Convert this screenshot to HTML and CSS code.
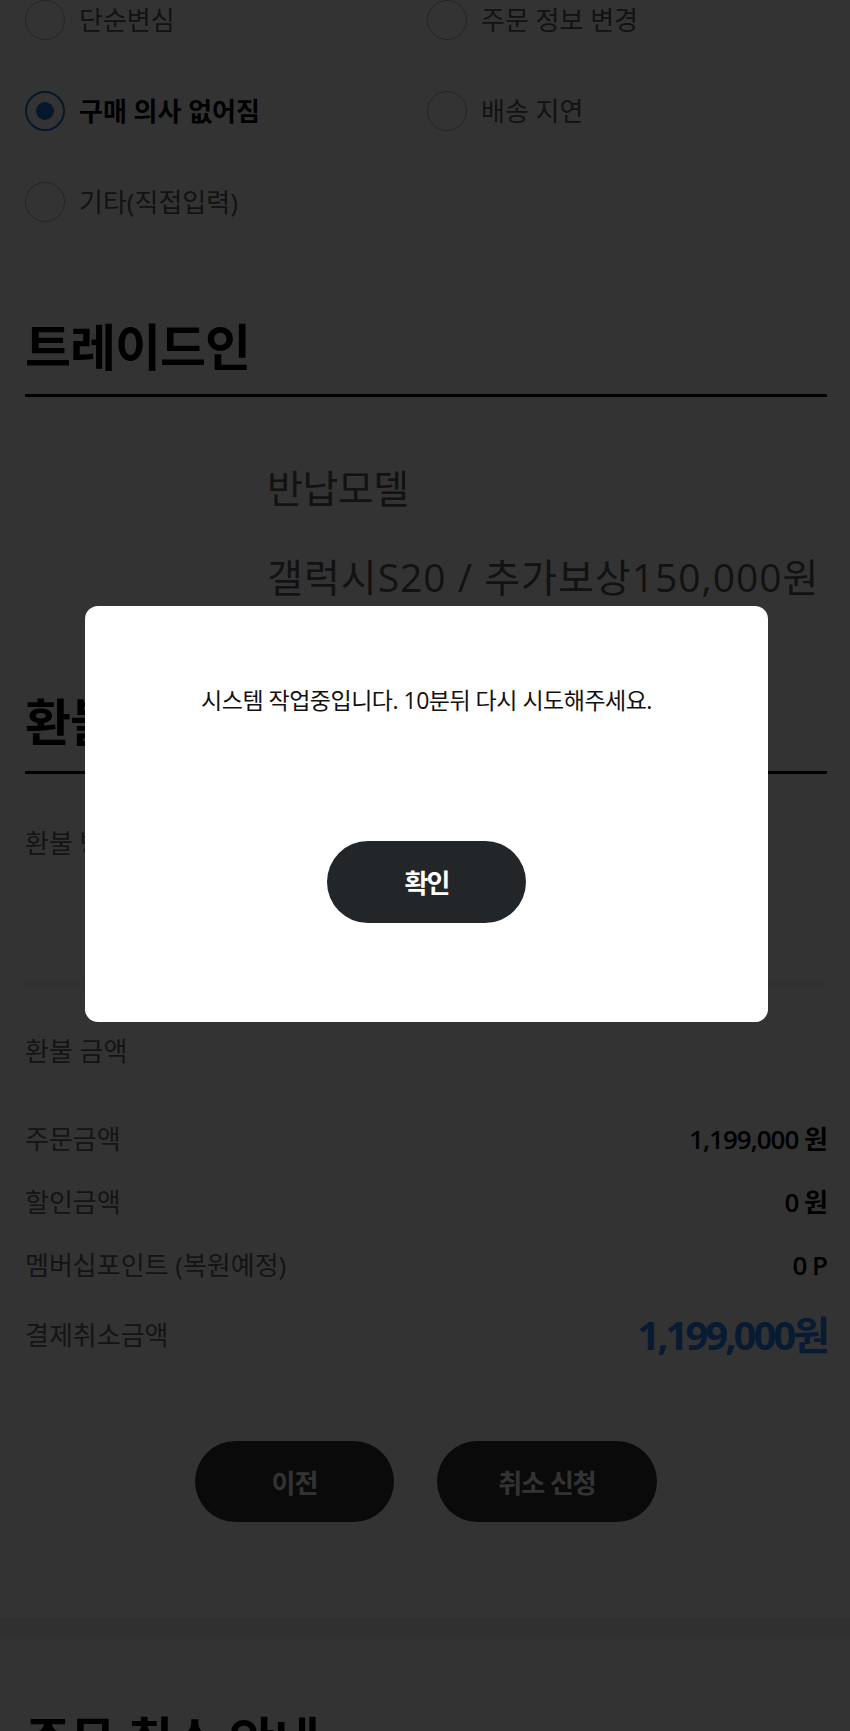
FILE: index.html
```html
<!DOCTYPE html>
<html lang="ko">
<head>
<meta charset="utf-8">
<title>주문 취소</title>
<link rel="stylesheet" href="styles.css">
</head>
<body>
<div class="page">
  <section class="reasons">
    <label class="radio"><span class="circle"></span><span class="radio-text">단순변심</span></label>
    <label class="radio"><span class="circle"></span><span class="radio-text">주문 정보 변경</span></label>
    <label class="radio checked"><span class="circle"></span><span class="radio-text">구매 의사 없어짐</span></label>
    <label class="radio"><span class="circle"></span><span class="radio-text">배송 지연</span></label>
    <label class="radio"><span class="circle"></span><span class="radio-text">기타(직접입력)</span></label>
  </section>

  <h2 class="sec-title tradein-title">트레이드인</h2>
  <div class="tradein">
    <div class="thumb"></div>
    <div class="tradein-info">
      <p class="ti-label">반납모델</p>
      <p class="ti-value">갤럭시S20 / 추가보상150,000원</p>
    </div>
  </div>

  <h2 class="sec-title refund-title">환불</h2>
  <div class="refund-method">
    <span class="label">환불 방법</span>
  </div>
  <div class="divider"></div>

  <div class="refund-amount">
    <p class="label amount-head">환불 금액</p>
    <div class="rows">
      <div class="row"><span class="label">주문금액</span><span class="val">1,199,000 원</span></div>
      <div class="row"><span class="label">할인금액</span><span class="val">0 원</span></div>
      <div class="row"><span class="label">멤버십포인트 (복원예정)</span><span class="val">0 P</span></div>
      <div class="row total"><span class="label">결제취소금액</span><span class="val total-val">1,199,000원</span></div>
    </div>
  </div>

  <div class="actions">
    <button class="btn btn-prev">이전</button>
    <button class="btn btn-cancel">취소 신청</button>
  </div>
</div>
<div class="band"></div>
<div class="page">
  <h2 class="sec-title notice-title">주문 취소 안내</h2>
</div>

<div class="dim">
  <div class="modal">
    <p class="modal-msg">시스템 작업중입니다. 10분뒤 다시 시도해주세요.</p>
    <button class="modal-btn">확인</button>
  </div>
</div>
</body>
</html>
```

FILE: styles.css
```css
* { box-sizing: border-box; }
html, body { margin: 0; padding: 0; }
body {
  background: #fff;
  font-family: "Open Sans", "Noto Sans CJK KR", sans-serif;
  color: #000;
  overflow: hidden;
}
p, h2 { margin: 0; }

.page { padding: 0 23px 0 25px; }

/* reasons */
.reasons {
  margin-top: -26px;
  display: grid;
  grid-template-columns: 402px 1fr;
  grid-auto-rows: 91px;
}
.radio {
  display: flex;
  align-items: center;
  gap: 14px;
}
.circle {
  width: 40px;
  height: 40px;
  border-radius: 50%;
  border: 1.5px solid #b0b0b0;
  flex: none;
  display: flex;
  align-items: center;
  justify-content: center;
}
.radio.checked .circle { border: 2px solid #1f6fd6; }
.radio.checked .circle::after {
  content: "";
  width: 18px;
  height: 18px;
  border-radius: 50%;
  background: #1f6fd6;
}
.radio-text {
  font-size: 26px;
  line-height: 36px;
  letter-spacing: 0;
  color: #5a5a5a;
}
.radio.checked .radio-text { color: #000; font-weight: 700; }

/* section titles */
.sec-title {
  font-size: 50px;
  line-height: 58px;
  font-weight: 700;
  letter-spacing: -1px;
  color: #000;
}
.tradein-title {
  margin-top: 71px;
  padding-bottom: 18px;
  border-bottom: 3px solid #000;
}
.refund-title {
  margin-top: 91px;
  padding-bottom: 20px;
  border-bottom: 3px solid #000;
}

/* tradein */
.tradein {
  display: grid;
  grid-template-columns: 242px 1fr;
  margin-top: 66px;
}
.tradein-info {
  display: flex;
  flex-direction: column;
  gap: 39px;
}
.ti-label, .ti-value {
  font-size: 39px;
  line-height: 50px;
  letter-spacing: -0.5px;
  color: #5a5a5a;
  white-space: nowrap;
}
.ti-value { letter-spacing: 1px; }

.label {
  font-size: 26px;
  line-height: 36px;
  letter-spacing: 0;
  color: #666;
}
.refund-method { margin-top: 51px; height: 158px; }
.divider { height: 2px; background: #eee; }

.refund-amount { margin-top: 48px; }
.rows {
  margin-top: 52px;
  display: flex;
  flex-direction: column;
  gap: 27px;
}
.row {
  display: flex;
  justify-content: space-between;
  align-items: center;
}
.val {
  font-size: 26px;
  line-height: 36px;
  font-weight: 600;
  letter-spacing: -1px;
  color: #000;
}
.row.total { height: 50px; }
.total-val {
  font-size: 40px;
  line-height: 50px;
  font-weight: 700;
  letter-spacing: -3px;
  color: #2f86ff;
}

.actions {
  margin-top: 81px;
  display: flex;
  justify-content: center;
  gap: 43px;
}
.btn {
  height: 81px;
  border: 0;
  border-radius: 41px;
  background: #333;
  color: #fff;
  font-family: inherit;
  font-size: 26px;
  font-weight: 700;
  letter-spacing: -1px;
}
.btn-prev { width: 199px; }
.btn-cancel { width: 220px; }

.band {
  margin-top: 96px;
  height: 21px;
  background: #f0f0f0;
}
.notice-title { margin-top: 72px; }

/* dim + modal */
.dim {
  position: fixed;
  inset: 0;
  background: rgba(0, 0, 0, 0.8);
  display: flex;
  justify-content: center;
  align-items: flex-start;
  padding-top: 606px;
  padding-left: 3px;
}
.modal {
  width: 683px;
  height: 416px;
  background: #fff;
  border-radius: 13px;
  display: flex;
  flex-direction: column;
  align-items: center;
  padding-top: 78px;
}
.modal-msg {
  font-size: 23px;
  line-height: 32px;
  letter-spacing: -0.5px;
  color: #111;
}
.modal-btn {
  margin-top: 125px;
  width: 199px;
  height: 82px;
  border: 0;
  border-radius: 41px;
  background: #222629;
  color: #fff;
  font-family: inherit;
  font-size: 26px;
  font-weight: 700;
  letter-spacing: -2px;
}
```
